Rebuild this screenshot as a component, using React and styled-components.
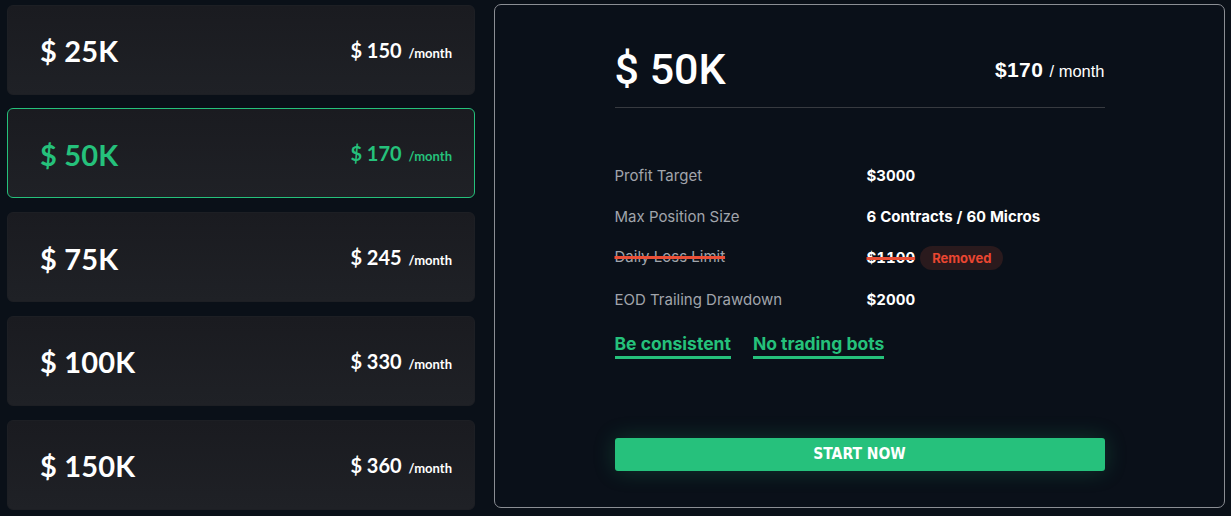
import { createGlobalStyle, styled } from "styled-components";

const plans = [
  { size: "25K", price: 150 },
  { size: "50K", price: 170 },
  { size: "75K", price: 245 },
  { size: "100K", price: 330 },
  { size: "150K", price: 360 },
];

const rules = [
  { label: "Profit Target", value: "$3000" },
  { label: "Max Position Size", value: "6 Contracts / 60 Micros" },
  { label: "Daily Loss Limit", value: "$1100", removed: true },
  { label: "EOD Trailing Drawdown", value: "$2000" },
];

const GlobalStyle = createGlobalStyle`
  html, body {
    margin: 0;
    background: #0a1018;
  }
  * { box-sizing: border-box; }
`;

const Page = styled.div`
  display: flex;
  gap: 19px;
  padding: 4px 6px 8px 7px;
  height: 516px;
  font-family: Inter, "Noto Sans", sans-serif;
`;

const PlanList = styled.div`
  width: 468px;
  display: flex;
  flex-direction: column;
  gap: 13.75px;
  padding-top: 0.5px;
`;

const PlanCard = styled.div`
  height: 90px;
  flex-shrink: 0;
  display: flex;
  align-items: center;
  justify-content: space-between;
  padding: 0 22px 0 32px;
  border-radius: 6px;
  background: linear-gradient(180deg, #1a1b20 0%, #1f2126 100%);
  border: 1px solid ${(p) => (p.$active ? "#25c17b" : "#1d1f24")};
  color: ${(p) => (p.$active ? "#25c17b" : "#ffffff")};
  font-family: Lato, "Open Sans", sans-serif;
  font-weight: 700;
  cursor: pointer;
`;

const PlanSize = styled.div`
  font-size: 29px;
  letter-spacing: 0.2px;
  padding-top: 2px;
`;

const PlanPrice = styled.div`
  font-size: 20px;
  span {
    font-size: 13px;
    margin-left: 2px;
  }
`;

const Detail = styled.div`
  flex: 1;
  border: 1px solid #8b8e94;
  border-radius: 7px;
  background: #0a1019;
  display: flex;
  justify-content: center;
  padding-top: 40px;
`;

const DetailInner = styled.div`
  width: 490px;
  display: flex;
  flex-direction: column;
`;

const Header = styled.div`
  display: flex;
  justify-content: space-between;
  align-items: center;
  padding-bottom: 14px;
  border-bottom: 1px solid #373a40;
  color: #ffffff;
`;

const Title = styled.div`
  font-family: Roboto, "Liberation Sans", sans-serif;
  font-size: 43px;
  font-weight: 500;
  line-height: 48px;
`;

const HeadPrice = styled.div`
  font-family: "Liberation Sans", Arial, sans-serif;
  font-size: 21px;
  font-weight: 700;
  letter-spacing: 0.4px;
  padding-top: 2px;
  span {
    font-size: 16.5px;
    font-weight: 400;
    letter-spacing: 0;
  }
`;

const RuleTable = styled.div`
  display: grid;
  grid-template-columns: 252px 1fr;
  row-gap: 18.5px;
  margin-top: 57px;
  font-size: 15px;
  line-height: 22px;
`;

const RuleLabel = styled.div`
  color: #a1a5ac;
  text-decoration: ${(p) => (p.$removed ? "line-through" : "none")};
  text-decoration-color: #ea4f37;
  text-decoration-thickness: 3px;
`;

const RuleValue = styled.div`
  display: flex;
  align-items: center;
  gap: 5px;
  color: #ffffff;
  font-weight: 700;
  font-variant-numeric: tabular-nums;
`;

const Struck = styled.span`
  text-decoration: line-through;
  text-decoration-color: #ea4f37;
  text-decoration-thickness: 3px;
`;

const Badge = styled.span`
  background: #2a1a1d;
  color: #ea4631;
  font-size: 13px;
  font-weight: 700;
  padding: 1px 12px;
  border-radius: 12px;
  line-height: 22px;
`;

const Tags = styled.div`
  display: flex;
  gap: 22px;
  margin-top: 22px;
`;

const Tag = styled.span`
  color: #25c17b;
  font-size: 17.5px;
  font-weight: 700;
  line-height: 22px;
  padding-bottom: 1px;
  border-bottom: 3px solid #25c17b;
`;

const StartButton = styled.button`
  margin-top: 79px;
  height: 33px;
  border: none;
  border-radius: 3px;
  background: #26c17c;
  color: #ffffff;
  font-family: "DejaVu Sans Condensed", "DejaVu Sans", sans-serif;
  font-size: 15.5px;
  font-weight: 700;
  box-shadow: 0 0 22px rgba(38, 193, 124, 0.22);
  cursor: pointer;
`;

export default function App() {
  return (
    <>
      <GlobalStyle />
      <Page>
        <PlanList>
          {plans.map((p) => (
            <PlanCard key={p.size} $active={p.size === "50K"}>
              <PlanSize>$ {p.size}</PlanSize>
              <PlanPrice>
                $ {p.price} <span>/month</span>
              </PlanPrice>
            </PlanCard>
          ))}
        </PlanList>
        <Detail>
          <DetailInner>
            <Header>
              <Title>$ 50K</Title>
              <HeadPrice>
                $170 <span>/ month</span>
              </HeadPrice>
            </Header>
            <RuleTable>
              {rules.map((r) => [
                <RuleLabel key={r.label} $removed={r.removed}>
                  {r.label}
                </RuleLabel>,
                <RuleValue key={r.label + "-value"}>
                  {r.removed ? (
                    <>
                      <Struck>{r.value}</Struck>
                      <Badge>Removed</Badge>
                    </>
                  ) : (
                    r.value
                  )}
                </RuleValue>,
              ])}
            </RuleTable>
            <Tags>
              <Tag>Be consistent</Tag>
              <Tag>No trading bots</Tag>
            </Tags>
            <StartButton>START NOW</StartButton>
          </DetailInner>
        </Detail>
      </Page>
    </>
  );
}
